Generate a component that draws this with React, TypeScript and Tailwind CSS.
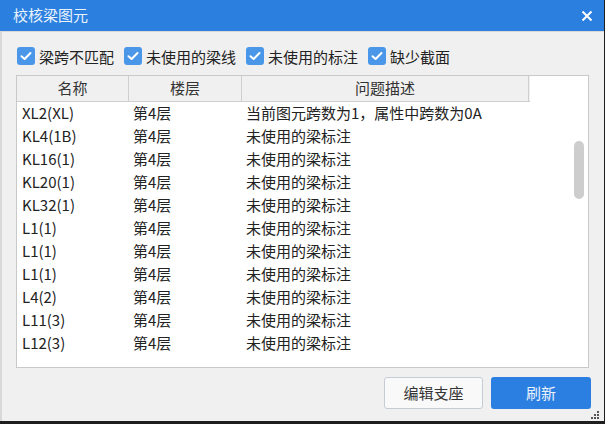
import { useState } from 'react';

const FONT = '"Noto Sans CJK SC", "Noto Sans", sans-serif';

type Row = { name: string; floor: string; desc: string };

const rows: Row[] = [
  { name: 'XL2(XL)', floor: '第4层', desc: '当前图元跨数为1，属性中跨数为0A' },
  { name: 'KL4(1B)', floor: '第4层', desc: '未使用的梁标注' },
  { name: 'KL16(1)', floor: '第4层', desc: '未使用的梁标注' },
  { name: 'KL20(1)', floor: '第4层', desc: '未使用的梁标注' },
  { name: 'KL32(1)', floor: '第4层', desc: '未使用的梁标注' },
  { name: 'L1(1)', floor: '第4层', desc: '未使用的梁标注' },
  { name: 'L1(1)', floor: '第4层', desc: '未使用的梁标注' },
  { name: 'L1(1)', floor: '第4层', desc: '未使用的梁标注' },
  { name: 'L4(2)', floor: '第4层', desc: '未使用的梁标注' },
  { name: 'L11(3)', floor: '第4层', desc: '未使用的梁标注' },
  { name: 'L12(3)', floor: '第4层', desc: '未使用的梁标注' },
];

const filters = ['梁跨不匹配', '未使用的梁线', '未使用的标注', '缺少截面'];

function Check({ label }: { label: string }) {
  const [on, setOn] = useState(true);
  return (
    <button type="button" onClick={() => setOn(!on)} className="flex items-center gap-[4px]">
      <span
        className={`w-[18px] h-[18px] rounded-[3px] flex items-center justify-center ${
          on ? 'bg-[#4a97ea]' : 'bg-white border border-[#aaa]'
        }`}
      >
        {on && (
          <svg width="12" height="10" viewBox="0 0 12 10">
            <path d="M1.5 5.2 L4.6 8 L10.5 2" stroke="#fff" strokeWidth="2" fill="none" strokeLinecap="round" strokeLinejoin="round" />
          </svg>
        )}
      </span>
      <span className="text-[15px] text-[#222] leading-none">{label}</span>
    </button>
  );
}

export default function App() {
  return (
    <div className="w-[605px] h-[424px] bg-[#1e1e1e] flex" style={{ fontFamily: FONT }}>
      <div className="w-[604px] h-[421px] bg-[#f0f0f0] flex flex-col border-l-2 border-[#d8d8d8]">
        {/* Title bar */}
        <div className="h-[31px] bg-[#2b7fde] flex items-center justify-between pl-[11px] pr-[11px] -ml-[2px]">
          <span className="text-[15px] text-white/90 pl-[2px]">校核梁图元</span>
          <svg width="12" height="12" viewBox="0 0 12 12">
            <path d="M1.5 1.5 L10.5 10.5 M10.5 1.5 L1.5 10.5" stroke="#fff" strokeWidth="2" />
          </svg>
        </div>
        <div className="h-px bg-[#d9d9d9]" />

        {/* Filters */}
        <div className="flex items-center gap-[10px] pl-[15px] mt-[15px] h-[18px]">
          {filters.map((f) => (
            <Check key={f} label={f} />
          ))}
        </div>

        {/* Table */}
        <div className="ml-[14px] mt-[10px] w-[573px] h-[293px] bg-white border border-[#c9c9c9] relative overflow-hidden">
          <div className="flex h-[26px] w-[513px] bg-[#f0f0f0] border-b border-[#cfcfcf] text-[15px] text-[#333]">
            <div className="w-[112px] border-r border-[#cfcfcf] flex items-center justify-center">名称</div>
            <div className="w-[113px] border-r border-[#cfcfcf] flex items-center justify-center">楼层</div>
            <div className="w-[287px] border-r border-[#cfcfcf] flex items-center justify-center">问题描述</div>
          </div>
          <div className="flex flex-col">
            {rows.map((r, i) => (
              <div key={i} className="flex h-[23px] items-center text-[15px] text-[#222]">
                <div className="w-[112px] pl-[5px]">{r.name}</div>
                <div className="w-[113px] pl-[4px]">{r.floor}</div>
                <div className="pl-[4px] whitespace-nowrap">{r.desc}</div>
              </div>
            ))}
          </div>
          {/* scrollbar thumb */}
          <div className="absolute left-[557px] top-[65px] w-[10px] h-[58px] rounded-full bg-[#cdcdcd]" />
        </div>

        {/* Buttons */}
        <div className="flex justify-end gap-[8px] mt-[9px] pr-[13px]">
          <button
            type="button"
            className="w-[99px] h-[32px] rounded-[3px] border border-[#c6ccd6] bg-[#f9f9f9] text-[15px] text-[#333]"
          >
            编辑支座
          </button>
          <button type="button" className="w-[100px] h-[32px] rounded-[3px] bg-[#2b7fe0] text-[15px] text-white/90">
            刷新
          </button>
        </div>

        {/* resize grip */}
        <div className="flex justify-end pr-[4px] mt-[1px]">
          <svg width="10" height="10" viewBox="0 0 10 10">
            <rect x="7" y="1" width="2" height="2" fill="#555" />
            <rect x="4" y="4" width="2" height="2" fill="#555" />
            <rect x="7" y="4" width="2" height="2" fill="#555" />
            <rect x="1" y="7" width="2" height="2" fill="#555" />
            <rect x="4" y="7" width="2" height="2" fill="#555" />
            <rect x="7" y="7" width="2" height="2" fill="#555" />
          </svg>
        </div>
      </div>
    </div>
  );
}
